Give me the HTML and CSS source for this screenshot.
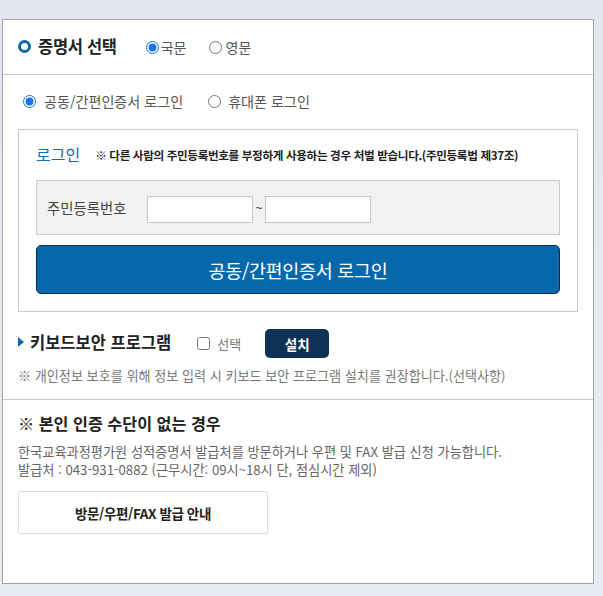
FILE: index.html
```html
<!DOCTYPE html>
<html lang="ko">
<head>
    <meta charset="UTF-8">
    <meta name="viewport" content="width=device-width, initial-scale=1.0">
    <title>증명서 발급 로그인</title>
    <link rel="stylesheet" href="styles.css">
</head>
<body>
    <div class="panel">
        <div class="cert-select">
            <span class="ring"></span>
            <h2 class="cert-title">증명서 선택</h2>
            <label class="opt opt-lang"><input type="radio" name="lang" checked>국문</label>
            <label class="opt opt-lang"><input type="radio" name="lang">영문</label>
        </div>

        <div class="login-section">
            <div class="login-type">
                <label class="opt opt-type"><input type="radio" name="type" checked>공동/간편인증서 로그인</label>
                <label class="opt opt-type"><input type="radio" name="type">휴대폰 로그인</label>
            </div>

            <div class="login-box">
                <div class="login-head">
                    <span class="login-title">로그인</span>
                    <span class="login-warn">※ 다른 사람의 주민등록번호를 부정하게 사용하는 경우 처벌 받습니다.(주민등록법 제37조)</span>
                </div>
                <div class="id-row">
                    <span class="id-label">주민등록번호</span>
                    <input class="id-input" type="text">
                    <span class="tilde">~</span>
                    <input class="id-input" type="password">
                </div>
                <button class="login-btn">공동/간편인증서 로그인</button>
            </div>

            <div class="kb-row">
                <span class="arrow"></span>
                <span class="kb-title">키보드보안 프로그램</span>
                <label class="kb-check"><input type="checkbox">선택</label>
                <button class="install-btn">설치</button>
            </div>
            <p class="kb-note">※ 개인정보 보호를 위해 정보 입력 시 키보드 보안 프로그램 설치를 권장합니다.(선택사항)</p>
        </div>

        <div class="no-auth">
            <h3 class="no-auth-title">※ 본인 인증 수단이 없는 경우</h3>
            <p class="no-auth-text">한국교육과정평가원 성적증명서 발급처를 방문하거나 우편 및 FAX 발급 신청 가능합니다.<br>발급처 : 043-931-0882 (근무시간: 09시~18시 단, 점심시간 제외)</p>
            <button class="guide-btn">방문/우편/FAX 발급 안내</button>
        </div>
    </div>
</body>
</html>
```

FILE: styles.css
```css
body {
    margin: 0;
    height: 596px;
    background: linear-gradient(to bottom, #e2e6ee, #e9ecf2);
    font-family: "Noto Sans CJK KR", "Noto Sans", sans-serif;
    color: #222;
}
.panel {
    margin: 19px 0 0 2px;
    width: 590px;
    height: 563px;
    background: #fff;
    border: 1px solid #a3a3a6;
}

/* 증명서 선택 */
.cert-select {
    display: flex;
    align-items: center;
    height: 54px;
    padding: 0 15px;
    border-bottom: 1px solid #c8c8c8;
}
.ring {
    width: 7px;
    height: 7px;
    border: 3px solid #0a68a6;
    border-radius: 50%;
    margin-top: -2px;
}
.cert-title {
    margin: -3px 0 0 7px;
    font-size: 16.5px;
    letter-spacing: -0.3px;
    font-weight: bold;
}
.opt {
    display: flex;
    align-items: center;
    color: #555;
}
.opt input {
    width: 13px;
    height: 13px;
    margin: 0;
    accent-color: #1a73e8;
}
.opt-lang {
    font-size: 14px;
    margin-left: 29px;
    gap: 2px;
}
.opt-lang + .opt-lang {
    margin-left: 22px;
    gap: 4px;
}

/* 로그인 */
.login-section {
    padding: 16px 15px 14px;
    border-bottom: 1px solid #c8c8c8;
}
.login-type {
    display: flex;
    height: 20px;
    padding-left: 5px;
}
.opt-type {
    font-size: 14.1px;
    gap: 8px;
}
.opt-type + .opt-type {
    margin-left: 25px;
    gap: 7px;
}
.login-box {
    margin-top: 18px;
    border: 1px solid #cbcbcb;
    padding: 0 17px 17px;
}
.login-head {
    display: flex;
    align-items: center;
    height: 50px;
}
.login-title {
    color: #1a6aa6;
    font-size: 16px;
    margin-top: -2px;
}
.login-warn {
    margin-left: 15px;
    font-size: 11.6px;
    font-weight: bold;
    letter-spacing: -0.35px;
    color: #222;
}
.id-row {
    display: flex;
    align-items: center;
    height: 53px;
    padding-left: 10px;
    background: #f2f2f2;
    border: 1px solid #cbcbcb;
}
.id-label {
    width: 100px;
    font-size: 14.4px;
    color: #444;
}
.id-input {
    box-sizing: border-box;
    width: 106px;
    height: 27px;
    margin: 3px 0 0;
    border: 1px solid #c6c6c6;
    background: #fff;
}
.tilde {
    width: 12px;
    text-align: center;
    font-family: "Liberation Sans", sans-serif;
    font-size: 12px;
    color: #444;
}
.login-btn {
    display: block;
    width: 100%;
    height: 49px;
    margin-top: 10px;
    background: #0668aa;
    border: 1px solid #0c2b46;
    border-radius: 5px;
    color: #fff;
    font-family: inherit;
    font-size: 18.5px;
    letter-spacing: -0.3px;
    cursor: pointer;
}

/* 키보드 보안 */
.kb-row {
    display: flex;
    align-items: center;
    height: 29px;
    margin-top: 17px;
}
.arrow {
    width: 0;
    height: 0;
    border-top: 5px solid transparent;
    border-bottom: 5px solid transparent;
    border-left: 6px solid #1565a8;
    margin-top: -3px;
}
.kb-title {
    margin: -3px 0 0 6px;
    font-size: 16.5px;
    font-weight: bold;
}
.kb-check {
    display: flex;
    align-items: center;
    gap: 7px;
    margin-left: 26px;
    font-size: 13px;
    color: #777;
}
.kb-check input {
    width: 13px;
    height: 13px;
    margin: 0;
}
.install-btn {
    width: 64px;
    height: 29px;
    margin-left: 24px;
    background: #0c3254;
    border: none;
    border-radius: 5px;
    color: #fff;
    font-family: inherit;
    font-size: 13.5px;
    font-weight: bold;
}
.kb-note {
    margin: 9px 0 0;
    font-size: 13.1px;
    line-height: 18px;
    color: #777;
}

/* 본인 인증 수단 없음 */
.no-auth {
    padding: 12px 15px 0;
}
.no-auth-title {
    margin: 0;
    font-size: 16.2px;
    line-height: 22px;
}
.no-auth-text {
    margin: 9px 0 0;
    font-size: 13.2px;
    line-height: 18px;
    color: #666;
}
.guide-btn {
    width: 250px;
    height: 43px;
    margin-top: 12px;
    background: #fff;
    border: 1px solid #dcdcdc;
    border-radius: 2px;
    font-family: inherit;
    font-size: 13.5px;
    font-weight: bold;
    letter-spacing: -0.4px;
    color: #222;
}
```
